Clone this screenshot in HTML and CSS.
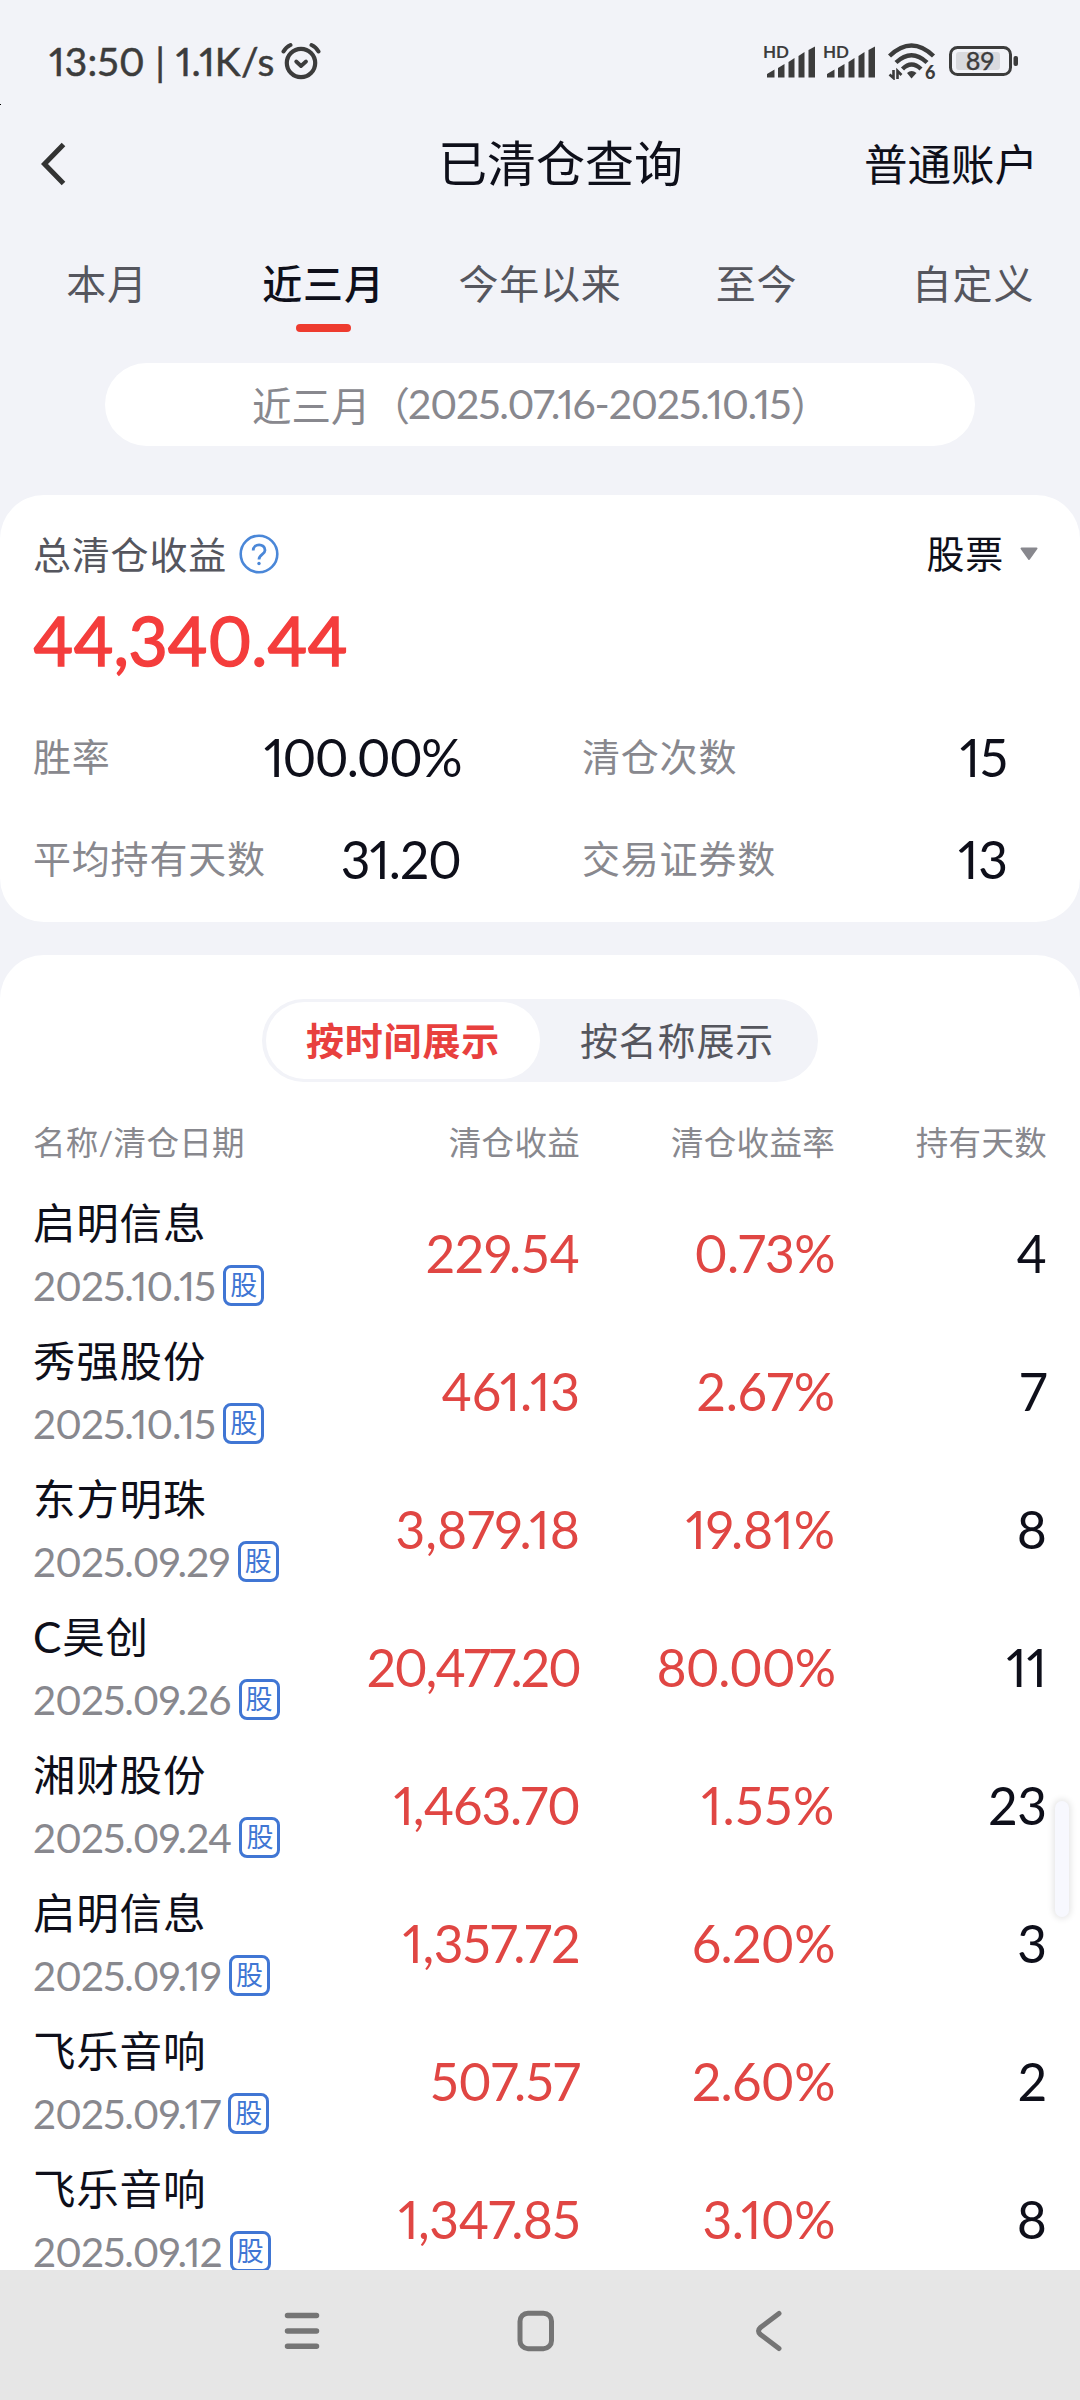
FILE: index.html
```html
<!DOCTYPE html>
<html lang="zh-CN">

<head>
    <meta charset="UTF-8">
    <meta name="viewport" content="width=device-width, initial-scale=1.0">
    <title>已清仓查询</title>
    <link rel="stylesheet" href="styles.css">
</head>

<body>
    <div class="screen">
        <div class="speck"></div>
        <div class="status-bar">
            <span class="status-text">13:50 | 1.1K/s</span>
            <svg class="alarm" width="40" height="38" viewBox="0 0 40 38" fill="none" stroke="#3c3c3c" stroke-linecap="round">
                <circle cx="20" cy="21" r="14.2" stroke-width="4.2" />
                <path d="M2.5 9.5Q5 5 9.5 3M37.5 9.5Q35 5 30.5 3" stroke-width="4" />
                <path d="M15.2 19.5L20 24L25 19.5" stroke-width="3.8" stroke-linejoin="round" />
            </svg>
            <div class="status-icons">
                <div class="signal">
                    <span class="hd">HD</span>
                    <svg width="52" height="36" viewBox="0 0 52 36" fill="#3c3c3c">
                        <path d="M2 34.500V31L9.500 26.500V34.500ZM13 34.500V25L19.500 21V34.500ZM23.500 34.500V19L29.500 15V34.500ZM33.500 34.500V13L39.500 9V34.500ZM43.500 34.500V7L50 3.500V34.500Z" />
                    </svg>
                </div>
                <div class="signal">
                    <span class="hd">HD</span>
                    <svg width="52" height="36" viewBox="0 0 52 36" fill="#3c3c3c">
                        <path d="M2 34.500V31L9.500 26.500V34.500ZM13 34.500V25L19.500 21V34.500ZM23.500 34.500V19L29.500 15V34.500ZM33.500 34.500V13L39.500 9V34.500ZM43.500 34.500V7L50 3.500V34.500Z" />
                    </svg>
                </div>
                <div class="wifi">
                    <svg width="48" height="38" viewBox="0 0 48 38" fill="none" stroke="#3c3c3c">
                        <path d="M1.5 14Q23.5 -7 45.5 14" stroke-width="4.4" />
                        <path d="M8 20.5Q23.5 6 39 20.5" stroke-width="4.4" />
                        <path d="M14.5 27Q23.5 18 33 27" stroke-width="4.4" />
                        <path d="M19 31Q23.5 27 28.500 31L23.5 36.5Z" fill="#3c3c3c" stroke="none" />
                        <path d="M5.5 28V36L1.5 32.5M9.5 37V29L13.5 33" stroke-width="2.6" />
                    </svg>
                    <span class="six">6</span>
                </div>
                <svg class="battery" width="70" height="32" viewBox="0 0 70 32">
                    <rect x="1.5" y="2.5" width="60" height="27" rx="7" fill="none" stroke="#3c3c3c" stroke-width="3" />
                    <rect x="7" y="7" width="44" height="18" rx="3" fill="#d9dade" />
                    <rect x="64.5" y="11" width="4.5" height="10" rx="2" fill="#3c3c3c" />
                    <text x="31" y="25" text-anchor="middle" class="level">89</text>
                </svg>
            </div>
        </div>

        <div class="header">
            <svg class="back" width="25" height="44" viewBox="0 0 25 44" fill="none" stroke="#333" stroke-width="5">
                <path d="M22.5 2.5L3.5 22L22.5 41.5" />
            </svg>
            <h1>已清仓查询</h1>
            <span class="account">普通账户</span>
        </div>

        <div class="tabs">
            <div class="tab">本月</div>
            <div class="tab active">近三月</div>
            <div class="tab">今年以来</div>
            <div class="tab">至今</div>
            <div class="tab">自定义</div>
        </div>

        <div class="date-range"><span>近三月（</span><span class="dates">2025.07.16-2025.10.15</span><span>）</span></div>

        <div class="card summary">
            <div class="summary-top">
                <span class="label dark">总清仓收益</span>
                <svg class="help" width="40" height="40" viewBox="0 0 40 40" fill="none" stroke="#4a87d8">
                    <circle cx="20" cy="20" r="18.3" stroke-width="2.6" />
                    <path d="M14.2 16.5C14.2 9 26 9 26 16.3C26 20.5 20 20.5 20 25.5" stroke-width="2.8" />
                    <circle cx="20" cy="29.5" r="1.7" fill="#4a87d8" stroke="none" />
                </svg>
                <span class="label type">股票</span>
                <svg class="caret" width="18" height="14" viewBox="0 0 18 14">
                    <path d="M1.5 1.5H16.5L9 12Z" fill="#88888e" stroke="#88888e" stroke-width="2" stroke-linejoin="round" />
                </svg>
            </div>
            <div class="total">44,340.44</div>
            <div class="stats">
                <div class="stat"><span class="label">胜率</span><span class="value tight-3">100.00%</span></div>
                <div class="stat"><span class="label">清仓次数</span><span class="value">15</span></div>
                <div class="stat"><span class="label">平均持有天数</span><span class="value tight-2">31.20</span></div>
                <div class="stat"><span class="label">交易证券数</span><span class="value">13</span></div>
            </div>
        </div>

        <div class="card list">
            <div class="toggle">
                <div class="option selected">按时间展示</div>
                <div class="option">按名称展示</div>
            </div>
            <div class="row head">
                <span>名称/清仓日期</span><span>清仓收益</span><span>清仓收益率</span><span>持有天数</span>
            </div>
            <div class="row">
                <div><div class="name">启明信息</div><div class="date"><span>2025.10.15</span><i>股</i></div></div>
                <span class="num">229.54</span><span class="num tight-1">0.73%</span><span class="days">4</span>
            </div>
            <div class="row">
                <div><div class="name">秀强股份</div><div class="date"><span>2025.10.15</span><i>股</i></div></div>
                <span class="num">461.13</span><span class="num">2.67%</span><span class="days">7</span>
            </div>
            <div class="row">
                <div><div class="name">东方明珠</div><div class="date"><span>2025.09.29</span><i>股</i></div></div>
                <span class="num">3,879.18</span><span class="num">19.81%</span><span class="days">8</span>
            </div>
            <div class="row">
                <div><div class="name">C昊创</div><div class="date"><span>2025.09.26</span><i>股</i></div></div>
                <span class="num tight-4">20,477.20</span><span class="num tight-2">80.00%</span><span class="days">11</span>
            </div>
            <div class="row">
                <div><div class="name">湘财股份</div><div class="date"><span>2025.09.24</span><i>股</i></div></div>
                <span class="num tight-2">1,463.70</span><span class="num loose">1.55%</span><span class="days">23</span>
            </div>
            <div class="row">
                <div><div class="name">启明信息</div><div class="date"><span>2025.09.19</span><i>股</i></div></div>
                <span class="num tight-1">1,357.72</span><span class="num tight-1">6.20%</span><span class="days">3</span>
            </div>
            <div class="row">
                <div><div class="name">飞乐音响</div><div class="date"><span>2025.09.17</span><i>股</i></div></div>
                <span class="num tight-1">507.57</span><span class="num tight-1">2.60%</span><span class="days">2</span>
            </div>
            <div class="row">
                <div><div class="name">飞乐音响</div><div class="date"><span>2025.09.12</span><i>股</i></div></div>
                <span class="num tight-1">1,347.85</span><span class="num tight-1">3.10%</span><span class="days">8</span>
            </div>
        </div>

        <div class="side-handle"></div>

        <div class="nav-bar">
            <svg width="44" height="44" viewBox="0 0 44 44" fill="none" stroke="#757575" stroke-width="5.5" stroke-linecap="round">
                <path d="M7.5 6.5H36.5M7.5 22H36.5M7.5 37.3H36.5" />
            </svg>
            <svg width="44" height="44" viewBox="0 0 44 44" fill="none" stroke="#757575" stroke-width="5">
                <rect x="5" y="4.2" width="31.5" height="35.5" rx="8" />
            </svg>
            <svg width="44" height="44" viewBox="0 0 44 44" fill="none" stroke="#757575" stroke-width="5" stroke-linecap="round">
                <path d="M29 4.5L10.5 18.5Q6.5 22 10.5 25.5L29 39.5" />
            </svg>
        </div>
    </div>
</body>

</html>
```
FILE: styles.css
```css
* {
    box-sizing: border-box;
}

body {
    margin: 0;
    background-color: #f2f3f8;
    font-family: Lato, "Noto Sans CJK SC", sans-serif;
    font-weight: 400;
    font-variant-numeric: proportional-nums;
    color: #0e0f1a;
}

.screen {
    position: relative;
    display: flex;
    flex-direction: column;
    width: 1080px;
    height: 2400px;
    overflow: hidden;
}

.speck {
    position: absolute;
    left: 0;
    top: 104px;
    width: 1px;
    height: 1px;
    background-color: #000;
}

/* status bar */
.status-bar {
    display: flex;
    align-items: center;
    height: 122px;
    padding: 0 61px 0 49px;
    color: #3c3c3c;
}

.status-text {
    width: 232px;
    font-size: 39px;
    line-height: 50px;
    letter-spacing: 0.3px;
    -webkit-text-stroke: 0.5px #3c3c3c;
    white-space: nowrap;
}

.status-icons {
    display: flex;
    align-items: center;
    margin-left: auto;
}

.signal,
.wifi {
    position: relative;
    display: flex;
}

.signal {
    margin-right: 8px;
}

.wifi {
    margin-left: 3px;
}

.battery {
    margin-left: 13px;
}

.hd {
    position: absolute;
    left: -2px;
    top: -3px;
    font-size: 17px;
    line-height: 24px;
    font-weight: 700;
}

.six {
    position: absolute;
    left: 37px;
    top: 18px;
    font-size: 18px;
    line-height: 24px;
    font-weight: 900;
}

.level {
    font-size: 25px;
    fill: #3c3c3c;
    stroke: #3c3c3c;
    stroke-width: 0.4px;
}

/* header */
.header {
    display: grid;
    grid-template-columns: 397px 1fr auto;
    align-items: center;
    height: 84px;
    padding: 0 42px 0 41px;
}

h1 {
    margin: 0 0 2px;
    font-size: 49px;
    line-height: 60px;
    font-weight: 400;
}

.account {
    margin-bottom: 1px;
    font-size: 43.5px;
    line-height: 60px;
}

.tabs {
    display: grid;
    grid-template-columns: repeat(5, 216.5px);
    justify-content: center;
    height: 157px;
    padding-top: 48px;
}

.tab {
    display: flex;
    flex-direction: column;
    align-items: center;
    gap: 10px;
    font-size: 40px;
    line-height: 60px;
    letter-spacing: 0.8px;
    color: #55565e;
}

.tab.active {
    font-weight: 500;
    color: #0e0f1a;
}

.tab.active::after {
    content: "";
    width: 55px;
    height: 8px;
    border-radius: 4px;
    background-color: #ee3b2f;
}

.date-range {
    display: flex;
    align-items: center;
    width: 870px;
    height: 83px;
    margin: 0 auto;
    padding: 0 0 2px 147px;
    border-radius: 42px;
    background-color: #fff;
    font-size: 39.5px;
    white-space: nowrap;
    color: #88888e;
}

.dates {
    margin-left: -2px;
    font-size: 41px;
    letter-spacing: -1.1px;
}

.card {
    background-color: #fff;
    border-radius: 44px;
}

/* summary */
.summary {
    height: 427px;
    margin-top: 49px;
    padding: 30px 33px 0;
}

.summary-top {
    display: flex;
    align-items: center;
    height: 58px;
}

.label {
    margin-bottom: 3px;
    font-size: 38px;
    line-height: 58px;
    letter-spacing: 0.8px;
    color: #88888e;
}

.label.dark {
    margin-bottom: 1px;
    color: #55565e;
}

.help {
    margin-left: 12px;
}

.label.type {
    margin-left: auto;
    color: #0e0f1a;
}

.caret {
    margin: 0 9px 0 16px;
}

.total {
    margin-top: 17px;
    font-size: 68px;
    line-height: 80px;
    letter-spacing: -0.4px;
    -webkit-text-stroke: 1.5px #f43d3c;
    color: #f43d3c;
}

.stats {
    display: grid;
    grid-template-columns: 428px 426px;
    column-gap: 121px;
    margin-top: 26px;
}

.stat {
    display: flex;
    align-items: center;
    justify-content: space-between;
    height: 102px;
}

.value {
    font-size: 51.5px;
    line-height: 60px;
}

/* cleared positions */
.list {
    height: 1445px;
    margin-top: 33px;
    padding: 44px 33px 0;
    border-radius: 44px 44px 0 0;
}

.toggle {
    display: flex;
    width: 556px;
    height: 83px;
    margin: 0 auto;
    padding: 3px 4px;
    border-radius: 42px;
    background-color: #f2f3f8;
}

.option {
    flex: 1;
    border-radius: 39px;
    font-size: 38px;
    line-height: 76px;
    letter-spacing: 0.8px;
    text-align: center;
    color: #55565e;
}

.option.selected {
    background-color: #fff;
    font-weight: 700;
    color: #e8403e;
}

.row {
    display: grid;
    grid-template-columns: 247px 300px 255px 212px;
    align-items: center;
    height: 138px;
    text-align: right;
}

.row > :first-child {
    text-align: left;
}

.head {
    height: 102px;
    padding-top: 14px;
    font-size: 32.5px;
    letter-spacing: 0.3px;
    color: #88888e;
}

.name {
    font-size: 42.5px;
    line-height: 65px;
    letter-spacing: 0.8px;
}

.date {
    display: flex;
    align-items: center;
    gap: 8px;
    height: 61px;
    font-size: 40.5px;
    letter-spacing: -0.8px;
    color: #88888e;
}

.date i {
    flex-shrink: 0;
    width: 41px;
    height: 41px;
    border: 3px solid #4076d4;
    border-radius: 8px;
    font-size: 27px;
    line-height: 34px;
    font-style: normal;
    letter-spacing: 0;
    text-align: center;
    color: #4076d4;
}

.num,
.days {
    font-size: 51.5px;
    line-height: 60px;
}

.num {
    color: #e04643;
}

.loose {
    letter-spacing: 0.8px;
}

.tight-1 {
    letter-spacing: -0.5px;
}

.tight-2 {
    letter-spacing: -1px;
}

.tight-3 {
    letter-spacing: -1.6px;
}

.tight-4 {
    letter-spacing: -1.9px;
}

/* floating handle at the right edge */
.side-handle {
    position: absolute;
    left: 1055px;
    top: 1801px;
    width: 14px;
    height: 116px;
    border-radius: 7px;
    background-color: #f7f8fe;
    box-shadow: 0 0 6px 2px rgba(0, 0, 0, 0.1);
}

.nav-bar {
    position: absolute;
    left: 0;
    bottom: 0;
    display: flex;
    gap: 191px;
    width: 1080px;
    height: 130px;
    padding: 39px 0 0 280px;
    background-color: #e6e6e6;
}
```
